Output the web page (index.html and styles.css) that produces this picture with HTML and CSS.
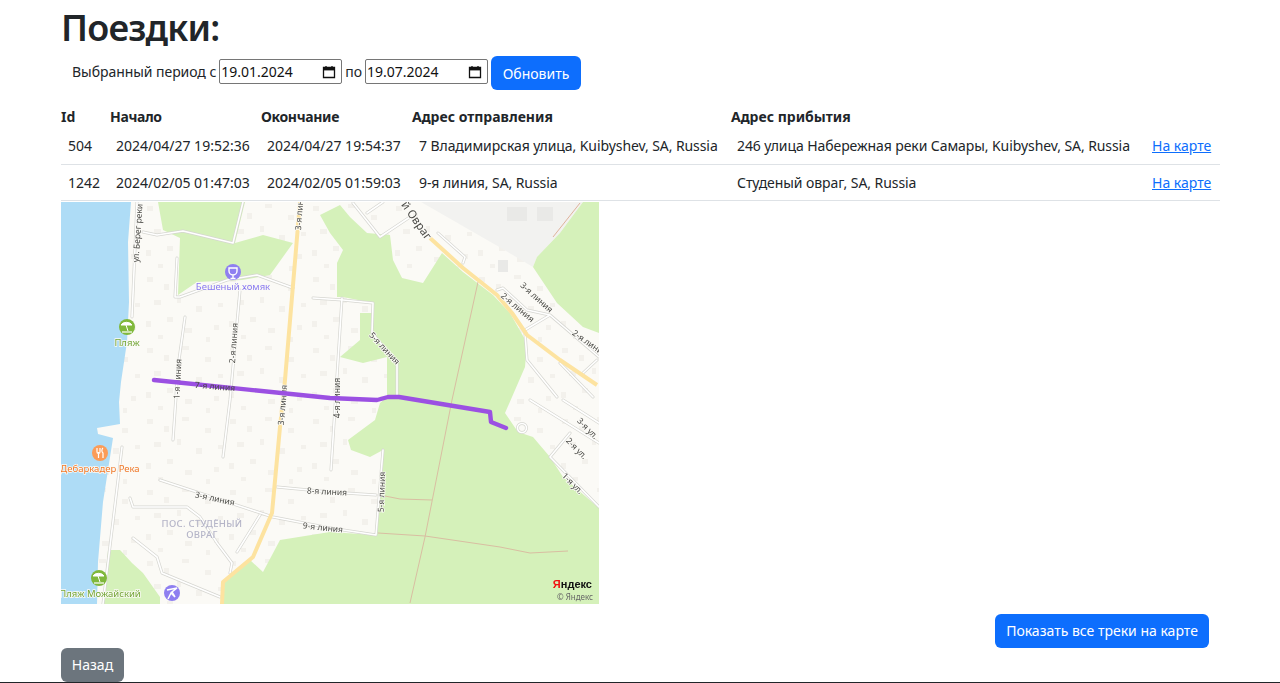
FILE: index.html
```html
<!DOCTYPE html>
<html lang="ru">
<head>
    <meta charset="UTF-8">
    <meta name="viewport" content="width=device-width, initial-scale=1.0">
    <title>Поездки</title>
    <link rel="stylesheet" href="styles.css">
</head>

<body>
    <div class="page">
        <h1 class="title">Поездки:</h1>

        <!-- Выбор периода -->
        <form class="period">
            <span class="periodText">Выбранный период с</span>
            <div class="dateField">
                <input class="dateInput" type="text" value="19.01.2024" aria-label="Начало периода">
                <svg class="calIcon" viewBox="0 0 14 14"><path d="M1.5 2.5h11v10h-11z M4 1v2 M10 1v2" fill="none" stroke="#111" stroke-width="1.3"/><rect x="1.5" y="3" width="11" height="2.4" fill="#111"/></svg>
            </div>
            <span class="periodText">по</span>
            <div class="dateField">
                <input class="dateInput" type="text" value="19.07.2024" aria-label="Конец периода">
                <svg class="calIcon" viewBox="0 0 14 14"><path d="M1.5 2.5h11v10h-11z M4 1v2 M10 1v2" fill="none" stroke="#111" stroke-width="1.3"/><rect x="1.5" y="3" width="11" height="2.4" fill="#111"/></svg>
            </div>
            <button class="btn btnBlue btnUpdate" type="button">Обновить</button>
        </form>

        <!-- Таблица поездок -->
        <table class="trips">
            <colgroup>
                <col class="colId"><col class="colDate"><col class="colDate"><col class="colFrom"><col class="colTo"><col>
            </colgroup>
            <thead>
                <tr><th>Id</th><th class="thTight">Начало</th><th class="thTight">Окончание</th><th>Адрес отправления</th><th>Адрес прибытия</th><th></th></tr>
            </thead>
            <tbody>
                <tr>
                    <td class="tdId">504</td>
                    <td>2024/04/27 19:52:36</td>
                    <td>2024/04/27 19:54:37</td>
                    <td class="tdFrom">7 Владимирская улица, Kuibyshev, SA, Russia</td>
                    <td class="tdTo">246 улица Набережная реки Самары, Kuibyshev, SA, Russia</td>
                    <td><a href="#">На карте</a></td>
                </tr>
                <tr>
                    <td class="tdId">1242</td>
                    <td>2024/02/05 01:47:03</td>
                    <td>2024/02/05 01:59:03</td>
                    <td class="tdFrom">9-я линия, SA, Russia</td>
                    <td class="tdTo">Студеный овраг, SA, Russia</td>
                    <td><a href="#">На карте</a></td>
                </tr>
            </tbody>
        </table>

        <!-- Карта с треком -->
        <svg class="map" viewBox="0 0 538 402" width="538" height="402">
            <defs>
                <pattern id="houses" width="83" height="71" patternUnits="userSpaceOnUse">
                    <g fill="#f3f1ec">
                        <rect x="3" y="4" width="6" height="5"/><rect x="20" y="11" width="5" height="6"/><rect x="38" y="2" width="7" height="4"/>
                        <rect x="61" y="13" width="6" height="5"/><rect x="10" y="27" width="7" height="5"/><rect x="33" y="24" width="4" height="6"/>
                        <rect x="52" y="33" width="6" height="6"/><rect x="2" y="48" width="5" height="6"/><rect x="23" y="44" width="6" height="5"/>
                        <rect x="41" y="55" width="7" height="5"/><rect x="70" y="52" width="5" height="5"/><rect x="74" y="30" width="5" height="4"/>
                        <rect x="14" y="62" width="5" height="4"/><rect x="62" y="64" width="4" height="5"/>
                    </g>
                </pattern>
                <g id="roads" fill="none" stroke-linejoin="round" stroke-linecap="round">
                    <path d="M76 0L71 115M61 245L42 402"/>
                    <path d="M82 30L96 33L122 29L172 41L182 0"/>
                    <path d="M116 56L114 95L119 95L166 78L196 73L232 86M252 96L282 98L312 101L311 131L336 161L336 195"/>
                    <path d="M124 115L117 165L112 238M179 88L169 198L162 255"/>
                    <path d="M281 96L270 268M322 248L315 333L269 326M99 278L212 315L269 326M216 285L269 290L315 293"/>
                    <path d="M69 296L72 305L126 305L139 315L156 341L171 361L169 371M72 336L96 355L101 371L159 395M199 313L176 350"/>
                    <path d="M377 31L404 55L402 61M436 88L442 86L466 108L489 113L538 155M464 128L489 113M464 131L466 158L496 195M499 161L532 195M522 171L536 158"/>
                    <path d="M292 1L319 35L349 15M306 11L322 0M469 198L538 241M502 198L538 221M538 305L489 255L509 231"/>
                    <circle cx="461" cy="226" r="4.5"/>
                </g>
            </defs>

            <rect width="538" height="402" fill="#fbfaf6"/>
            <rect width="538" height="402" fill="url(#houses)"/>
            <path d="M360 0L522 0L499 31L476 55L472 65L440 46Z" fill="#f2f2f0"/>
            <g fill="#e9e9e7"><rect x="446" y="5" width="20" height="14"/><rect x="476" y="5" width="16" height="14"/><rect x="437" y="58" width="10" height="12"/></g>

            <!-- вода -->
            <path d="M0 0H70L67 40L68 100L66 140L60 180L58 200L59 222L36 226L37 232L52 236L42 300L37 360L36 402H0Z" fill="#aedcf6"/>
            <!-- зелень -->
            <g fill="#d5f1ba">
                <path d="M97 0H184L174 41L202 33L232 41L209 73L181 78L136 80L117 93L119 36L102 28Z"/>
                <path d="M259 13L279 3L289 15L306 31L329 33L332 58L341 76L362 81L381 51L402 70L432 93L449 111L466 141L464 165L451 195L444 211L457 230L472 235L489 255L502 275L538 306V402H162V380L189 358L202 370L219 338L269 330L314 333L319 281L322 248L309 255L290 248L287 238L314 218L319 201L326 195V155L302 161L279 155L299 138V111L312 111V101L282 95L276 95V61L282 48L269 31Z"/>
                <path d="M522 0H538V131L522 125L496 101L472 65L476 55L499 31Z"/>
                <path d="M42 402L47 348L59 348L71 361L82 371L99 395L99 402Z"/>
            </g>
            <!-- тропинки -->
            <g fill="none" stroke="#d9bea2" stroke-width="1">
                <path d="M417 80L391 198L364 335L349 401"/>
                <path d="M317 331L364 334L439 345L469 351L507 349"/>
                <path d="M324 294L339 297L371 298"/>
                <path d="M519 1L492 35" stroke="#dfb29c"/>
            </g>
            <!-- дороги -->
            <use href="#roads" stroke="#d6d6d1" stroke-width="3"/>
            <use href="#roads" stroke="#ffffff" stroke-width="1.6"/>
            <g fill="none" stroke="#fde3a0" stroke-width="4" stroke-linejoin="round">
                <path d="M239 0L224 178L219 225L211 311L192 355L162 380L161 402"/>
                <path d="M369 36L402 66L436 93L451 111L466 133L499 158L536 183"/>
            </g>

            <!-- подписи улиц -->
            <g class="mapLabel">
                <text transform="translate(76 31) rotate(-86)">ул. Берег реки</text>
                <text transform="translate(116 177) rotate(-87)">1-я линия</text>
                <text transform="translate(172 141) rotate(-86)">2-я линия</text>
                <text transform="translate(238 8) rotate(-86)">3-я линия</text>
                <text transform="translate(221 203) rotate(-85)">3-я линия</text>
                <text transform="translate(275 196) rotate(-90)">4-я линия</text>
                <text transform="translate(324 146) rotate(47)">5-я линия</text>
                <text class="labelBig" transform="translate(356 18) rotate(55)">й Овраг</text>
                <text transform="translate(457 105) rotate(40)">2-я линия</text>
                <text transform="translate(476 95) rotate(42)">3-я линия</text>
                <text transform="translate(529 141) rotate(35)">2-я линия</text>
                <text transform="translate(527 226) rotate(45)">3-я ул.</text>
                <text transform="translate(516 246) rotate(45)">2-я ул.</text>
                <text transform="translate(512 281) rotate(45)">1-я ул.</text>
                <text transform="translate(154 296) rotate(12)">3-я линия</text>
                <text transform="translate(266 289) rotate(3)">8-я линия</text>
                <text transform="translate(262 325) rotate(6)">9-я линия</text>
                <text transform="translate(320 290) rotate(-88)">5-я линия</text>
            </g>
            <text class="mapPlace" x="141" y="325">ПОС. СТУДЁНЫЙ<tspan x="141" dy="11">ОВРАГ</tspan></text>

            <!-- точки на карте -->
            <circle cx="172" cy="70" r="8" fill="#8f7ff0"/>
            <path d="M168 66h8v3a4 4 0 0 1-8 0zM172 73v3M169.500 76.500h5" fill="none" stroke="#fff" stroke-width="1.4"/>
            <text class="mapPoi poiPurple" x="172" y="88">Бешеный хомяк</text>

            <circle cx="66" cy="125" r="8" fill="#80b83c"/>
            <path d="M60 123a6 4.500 0 0 1 11 0zM65 123L67 129" fill="#fff" stroke="#fff" stroke-width="1"/>
            <path d="M61 130h10" stroke="#fff" stroke-width="1.2"/>
            <text class="mapPoi poiGreen" x="66" y="144">Пляж</text>

            <circle cx="39" cy="251" r="8" fill="#fb9c58"/>
            <path d="M36 246v4a1.500 1.500 0 0 0 3 0v-4M37.500 250v6M42 246c-1.500 1-1.500 4 0 5v5" fill="none" stroke="#fff" stroke-width="1.2"/>
            <text class="mapPoi poiOrange" x="39" y="270">Дебаркадер Река</text>

            <circle cx="38" cy="376" r="8" fill="#80b83c"/>
            <path d="M32 374a6 4.500 0 0 1 11 0zM37 374L39 380" fill="#fff" stroke="#fff" stroke-width="1"/>
            <path d="M33 381h10" stroke="#fff" stroke-width="1.2"/>
            <text class="mapPoi poiGreen" x="39" y="395">Пляж Можайский</text>

            <circle cx="111" cy="391" r="8" fill="#8f7ff0"/>
            <path d="M106 388L116 386L111 390L114 395L110 391L107 397" fill="none" stroke="#fff" stroke-width="1.5"/>

            <!-- трек -->
            <path d="M93 178L269 196L316 198L327 195L338 195L429 210L430 220L445 226" fill="none" stroke="#9b50e2" stroke-width="4.400" stroke-linejoin="round" stroke-linecap="round"/>
            <text class="mapOnTrack" transform="translate(154 184) rotate(5)">7-я линия</text>

            <text class="mapLogo" x="531" y="386"><tspan fill="#f01010">Я</tspan>ндекс</text>
            <text class="mapCopy" x="532" y="398">© Яндекс</text>
        </svg>

        <div class="showAll">
            <button class="btn btnBlue btnAll" type="button">Показать все треки на карте</button>
        </div>

        <button class="btn btnGray" type="button">Назад</button>
    </div>
</body>
</html>
```

FILE: styles.css
```css
* {
    box-sizing: border-box;
}

body {
    margin: 0;
    background: white;
    color: #212529;
    font-family: "Noto Sans", sans-serif;
    font-size: 14px;
}

.page {
    height: 683px;
    padding: 0 60px 0 61px;
    border-bottom: 1px solid #212529;
    overflow: hidden;
}

.title {
    margin: 0;
    height: 56px;
    font-size: 36px;
    font-weight: 600;
    letter-spacing: -0.8px;
    line-height: 56px;
}

.period {
    display: flex;
    align-items: center;
    gap: 3px;
    height: 34px;
    padding-left: 11px;
}

.periodText {
    margin-bottom: 3px;
    letter-spacing: -0.05px;
}

.dateField {
    display: flex;
    align-items: center;
    width: 123px;
    height: 25px;
    margin-bottom: 3px;
    padding: 0 5px 0 1px;
    border: 1px solid #767676;
    border-radius: 2px;
}

.dateInput {
    width: 96px;
    padding: 0;
    border: none;
    outline: none;
    color: #111;
    font-family: inherit;
    font-size: 14px;
}

.calIcon {
    width: 14px;
    height: 14px;
    margin-left: auto;
}

.btn {
    height: 34px;
    padding: 0 12px;
    border: none;
    border-radius: 6px;
    color: white;
    font-family: inherit;
    font-size: 14px;
}

.btnBlue {
    background-color: #0d6efd;
}

.btnGray {
    display: block;
    width: 63px;
    background-color: #6c757d;
    padding: 0;
}

.btnUpdate {
    width: 90px;
    padding: 0;
}

.btnAll {
    width: 214px;
    padding: 0;
}

.trips {
    width: 1159px;
    margin-top: 14px;
    border-collapse: collapse;
    table-layout: fixed;
}

.colId {
    width: 49px;
}

.colDate {
    width: 151px;
}

.colFrom {
    width: 319px;
}

.colTo {
    width: 415px;
}

.trips th {
    height: 24px;
    padding: 0;
    text-align: left;
    font-weight: 700;
}

.trips .thTight {
    letter-spacing: -0.35px;
}

.trips td {
    height: 36px;
    padding: 0 0 0 6px;
    border-bottom: 1px solid #dee2e6;
    white-space: nowrap;
}

.trips .tdId {
    padding-left: 7px;
}

.trips .tdFrom {
    padding-left: 7px;
    letter-spacing: -0.08px;
}

.trips .tdTo {
    letter-spacing: -0.08px;
}

.trips a {
    color: #0d6efd;
}

.map {
    display: block;
    margin-top: 1px;
    filter: blur(0.4px);
}

.mapLabel text,
.mapOnTrack {
    fill: #4a4a46;
    font-family: "Noto Sans", sans-serif;
    font-size: 8.500px;
    text-anchor: middle;
    dominant-baseline: central;
}

.mapLabel text {
    paint-order: stroke;
    stroke: #fbfaf6;
    stroke-width: 1.5px;
}

.mapLabel .labelBig {
    font-size: 11.500px;
}

.mapPlace {
    fill: #b5b5c8;
    font-family: "Noto Sans", sans-serif;
    font-size: 9.500px;
    font-weight: 500;
    letter-spacing: 0.3px;
    text-anchor: middle;
}

.mapPoi {
    font-family: "Noto Sans", sans-serif;
    font-size: 9.500px;
    text-anchor: middle;
    paint-order: stroke;
    stroke: #fbfaf6;
    stroke-width: 1.5px;
}

.poiPurple {
    fill: #8a7af0;
}

.poiGreen {
    fill: #73a535;
}

.poiOrange {
    fill: #f0792a;
}

.mapLogo {
    fill: #111;
    font-family: "Liberation Sans", sans-serif;
    font-size: 11px;
    font-weight: 700;
    text-anchor: end;
}

.mapCopy {
    fill: #666;
    font-family: "Noto Sans", sans-serif;
    font-size: 8px;
    text-anchor: end;
}

.showAll {
    display: flex;
    justify-content: flex-end;
    padding: 10px 11px 0 0;
    height: 44px;
}
```
